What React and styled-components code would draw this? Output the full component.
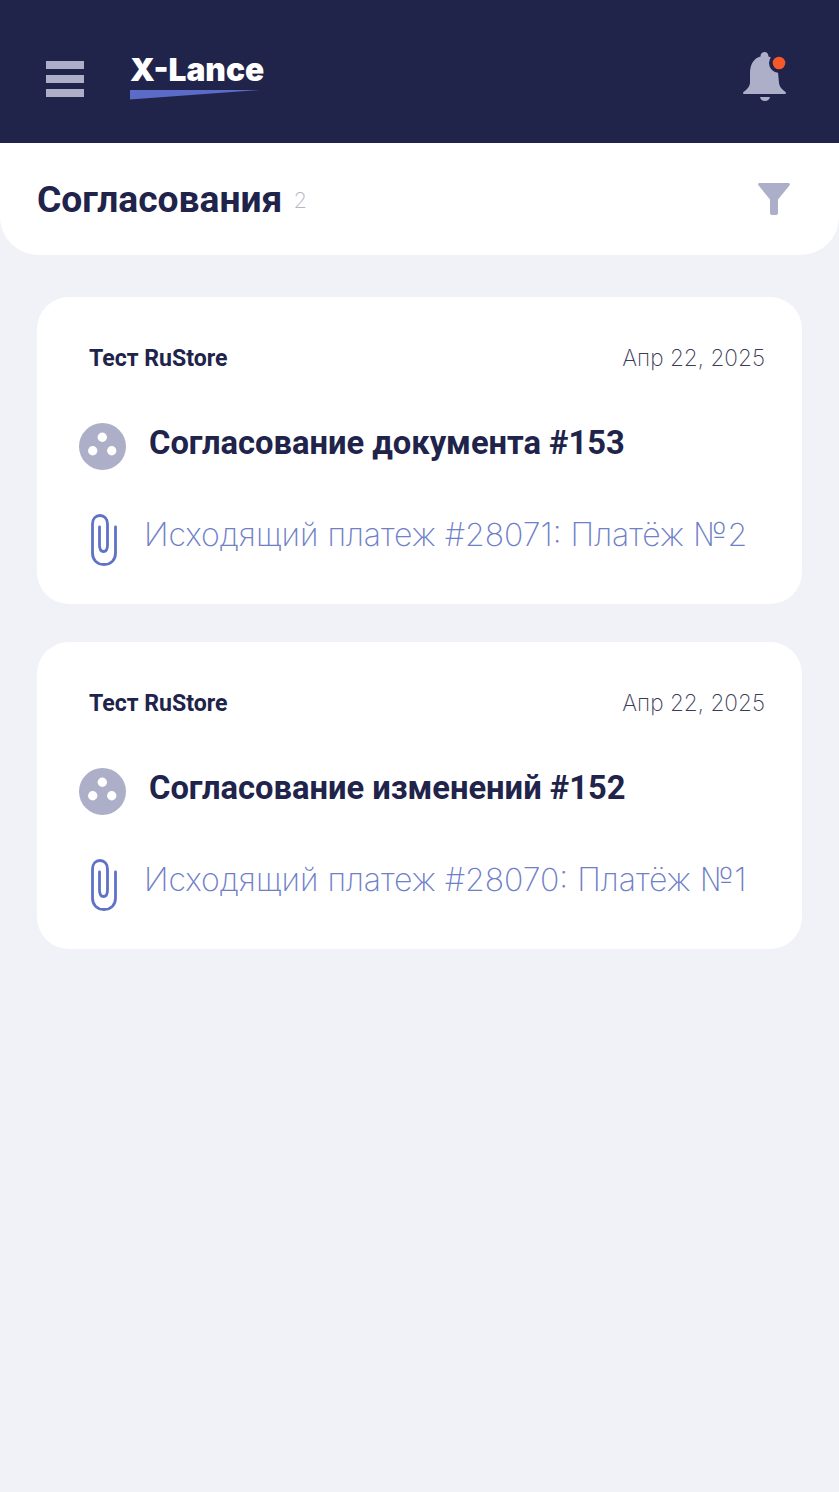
import React from "react";
import styled, { createGlobalStyle } from "styled-components";

const GlobalStyle = createGlobalStyle`
  html, body {
    margin: 0;
    padding: 0;
    background: #f0f2f7;
  }
  body {
    font-family: Roboto, "Liberation Sans", sans-serif;
  }
`;

const items = [
  { id: 153, author: "Тест RuStore", date: "Апр 22, 2025", title: "Согласование документа #153", file: "Исходящий платеж #28071: Платёж №2" },
  { id: 152, author: "Тест RuStore", date: "Апр 22, 2025", title: "Согласование изменений #152", file: "Исходящий платеж #28070: Платёж №1" },
];

const App = () => {
  return (
    <Page>
      <GlobalStyle />
      <Header>
        <Burger>
          <span />
          <span />
          <span />
        </Burger>
        <Logo>
          <LogoText>X-Lance</LogoText>
          <LogoSwoosh viewBox="0 0 130 10">
            <polygon points="0,0 130,0 0,9.5" fill="#5a6bc8" />
          </LogoSwoosh>
        </Logo>
        <Bell viewBox="0 0 44 50">
          <path
            fill="#adaec8"
            d="M21.500 0c2.500 0 4 2 4 4.500C31 6 34.500 12 35 20l1 11c.3 3 2 5 4 7l2.500 2c1 1 .3 2-1 2H1.500c-1.300 0-2-1-1-2L3 38c2-2 3.700-4 4-7l0-11C7.500 11 11.500 6 17.500 4.500c0-2.500 1.500-4.500 4-4.500z"
          />
          <path fill="#adaec8" d="M17 45h10c-.5 2.500-2.500 4-5 4s-4.500-1.500-5-4z" />
          <circle cx="36" cy="11" r="10" fill="#20234a" />
          <circle cx="36" cy="11" r="6.300" fill="#f4582b" />
        </Bell>
      </Header>

      <TitleBar>
        <TitleGroup>
          <Title>Согласования</Title>
          <Count>2</Count>
        </TitleGroup>
        <Funnel viewBox="0 0 32 32">
          <path
            fill="#adaec8"
            d="M1.500 0h29c1.200 0 1.800 1.300 1.100 2.200L20 16.500V30c0 1.100-.9 2-2 2h-4c-1.100 0-2-.9-2-2V16.500L.4 2.200C-.3 1.300.3 0 1.500 0z"
          />
        </Funnel>
      </TitleBar>

      <List>
        {items.map((item) => (
          <Card key={item.id}>
            <CardTop>
              <Author>{item.author}</Author>
              <DateText>{item.date}</DateText>
            </CardTop>
            <CardTitleRow>
              <StatusIcon viewBox="0 0 47 47">
                <circle cx="23.500" cy="23.500" r="23.500" fill="#adaec8" />
                <circle cx="23.300" cy="14.300" r="4.700" fill="#fff" />
                <circle cx="13.700" cy="27.700" r="4.700" fill="#fff" />
                <circle cx="32.700" cy="27.700" r="4.700" fill="#fff" />
              </StatusIcon>
              <CardTitle>{item.title}</CardTitle>
            </CardTitleRow>
            <FileRow>
              <Clip viewBox="0 0 28 52">
                <path
                  fill="none"
                  stroke="#5f72c6"
                  strokeWidth="2.800"
                  strokeLinecap="round"
                  d="M9.500 13V31c0 4 1.500 6.500 4 6.500s4-2.500 4-6.500V10c0-5-3-8.500-7.500-8.500S2.500 5 2.500 10v29c0 7 4.500 11.500 11.500 11.500S25.500 46 25.500 39V13"
                />
              </Clip>
              <FileName>{item.file}</FileName>
            </FileRow>
          </Card>
        ))}
      </List>
    </Page>
  );
};

export default App;

const Page = styled.div`
  width: 100%;
  min-height: 1492px;
  background: #f0f2f7;
`;

const Header = styled.header`
  height: 143px;
  box-sizing: border-box;
  padding: 0 52px 0 46px;
  background: #20234a;
  display: flex;
  align-items: center;
`;

const Burger = styled.div`
  width: 38px;
  display: flex;
  flex-direction: column;
  gap: 6px;
  margin-top: 15px;

  span {
    display: block;
    height: 8px;
    background: #adaec8;
  }
`;

const Logo = styled.div`
  margin-left: 46px;
  display: flex;
  flex-direction: column;
  margin-top: 8px;
`;

const LogoText = styled.div`
  font-family: Inter, sans-serif;
  font-size: 31.700px;
  font-weight: 900;
  line-height: 36px;
  color: #fff;
`;

const LogoSwoosh = styled.svg`
  width: 130px;
  height: 10px;
  margin-top: 2px;
`;

const Bell = styled.svg`
  width: 44px;
  height: 50px;
  margin-left: auto;
  margin-top: 10px;
`;

const TitleBar = styled.div`
  height: 112px;
  box-sizing: border-box;
  padding: 0 49px 0 37px;
  background: #fff;
  border-radius: 0 0 38px 38px;
  display: flex;
  align-items: center;
  justify-content: space-between;
`;

const TitleGroup = styled.div`
  display: flex;
  align-items: baseline;
  gap: 11px;
`;

const Title = styled.h1`
  margin: 0;
  font-size: 37.200px;
  font-weight: 700;
  color: #20234a;
`;

const Count = styled.span`
  font-family: Inter, sans-serif;
  font-size: 22px;
  font-weight: 200;
  color: #b5b6c2;
  position: relative;
  top: -4px;
`;

const Funnel = styled.svg`
  width: 32px;
  height: 32px;
`;

const List = styled.main`
  padding: 42px 37px 0;
  display: flex;
  flex-direction: column;
  gap: 38px;
`;

const Card = styled.section`
  height: 307px;
  box-sizing: border-box;
  padding: 46px 37px 0 42px;
  background: #fff;
  border-radius: 32px;
`;

const CardTop = styled.div`
  display: flex;
  align-items: center;
  justify-content: space-between;
  height: 30px;
  padding-left: 10px;
`;

const Author = styled.span`
  font-size: 23.100px;
  font-weight: 700;
  color: #20234a;
`;

const DateText = styled.span`
  font-family: Inter, sans-serif;
  font-size: 22.600px;
  font-weight: 200;
  color: #3a3c58;
  position: relative;
  top: -1px;
`;

const CardTitleRow = styled.div`
  display: flex;
  align-items: center;
  gap: 23px;
  margin-top: 50px;
`;

const StatusIcon = styled.svg`
  width: 47px;
  height: 47px;
  flex-shrink: 0;
`;

const CardTitle = styled.h2`
  margin: 0;
  font-size: 32.700px;
  font-weight: 700;
  color: #20234a;
  position: relative;
  top: -4px;
`;

const FileRow = styled.div`
  display: flex;
  align-items: center;
  gap: 26px;
  margin-top: 44px;
  padding-left: 11px;
`;

const Clip = styled.svg`
  width: 28px;
  height: 52px;
  flex-shrink: 0;
`;

const FileName = styled.span`
  font-family: Inter, sans-serif;
  font-size: 32px;
  font-weight: 200;
  color: #6f7fc8;
  white-space: nowrap;
  position: relative;
  top: -6px;
`;
